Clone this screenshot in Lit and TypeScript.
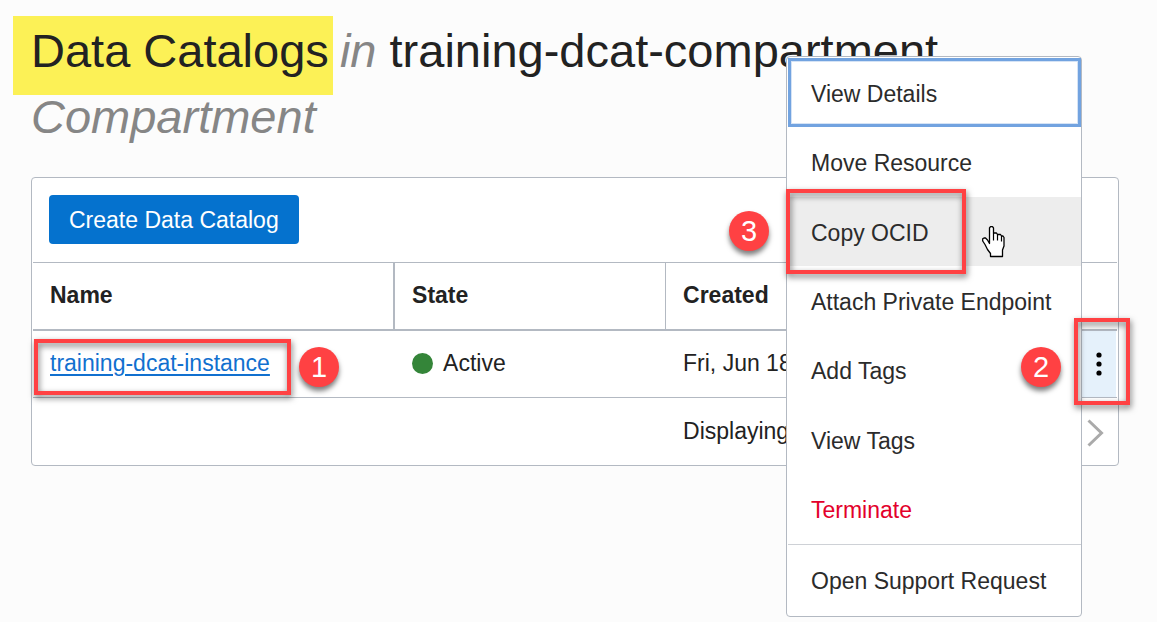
import { LitElement, html, css, svg, nothing } from "lit";
import { customElement, property } from "lit/decorators.js";

@customElement("step-marker")
class StepMarker extends LitElement {
  @property() number = "";

  static styles = css`
    :host {
      display: grid;
      place-items: center;
      width: 40px;
      height: 40px;
      border-radius: 50%;
      background: #ff4143;
      color: #fff;
      font: 400 29px/40px "Liberation Sans", Arial, sans-serif;
      box-shadow: 0 4px 5px rgba(0, 0, 0, 0.5);
    }
  `;

  render() {
    return html`${this.number}`;
  }
}

interface MenuItem {
  label: string;
  tone?: string;
  marked?: boolean;
}

const ITEMS: MenuItem[] = [
  { label: "View Details", tone: "focused" },
  { label: "Move Resource" },
  { label: "Copy OCID", tone: "hovered", marked: true },
  { label: "Attach Private Endpoint" },
  { label: "Add Tags" },
  { label: "View Tags" },
  { label: "Terminate", tone: "danger" },
];

const hand = svg`
  <path d="M7.500 17.500 V2 L8.500 .7 H10.500 L11.500 2 V7 H14.500 L15.500 8.500 H18.500 L19.500 10 H21 L22 11.500 V20 L20.500 24 V30.500 H8.500 V27.500 L5.500 23.500 L3 18.500 L.7 15 V12.800 L2 12 H3.500 L5.500 14 Z"
    fill="#fff" stroke="#000" stroke-width="1.300" stroke-linejoin="round"/>
  <path d="M11.500 7 V14.500 M15.500 8.500 V14.500 M19.500 10 V15.500" fill="none" stroke="#000" stroke-width="1.200"/>`;

@customElement("action-menu")
class ActionMenu extends LitElement {
  static styles = css`
    :host {
      display: block;
      box-sizing: border-box;
      width: 296px;
      border: 1px solid #b3b9c2;
      border-radius: 4px;
      background: #fff;
      padding: 1px 0 1px 1px;
    }
    .group {
      display: flex;
      flex-direction: column;
      min-height: 486px;
    }
    .row {
      position: relative;
      display: flex;
      flex: 1;
    }
    .item {
      flex: 1;
      border: 0;
      background: none;
      padding: 2px 23px 0;
      text-align: left;
      color: #2b2b2b;
      font: 23px/26px "Liberation Sans", Arial, sans-serif;
      white-space: nowrap;
    }
    .focused {
      outline: none;
      box-shadow: inset 0 0 0 3px #72a3e0, inset 0 0 0 4px #d5e3f5;
    }
    .hovered {
      background: #ededed;
    }
    .danger {
      color: #e3002b;
    }
    .support {
      border-top: 1px solid #ced1d6;
      height: 70px;
    }
    .frame {
      position: absolute;
      inset: -8px 115px -8px -2px;
      border: 4px solid #ff4143;
      filter: drop-shadow(1px 3px 3px rgba(0, 0, 0, 0.55));
      pointer-events: none;
    }
    .marker {
      position: absolute;
      right: 100%;
      top: 14px;
      margin-right: 19px;
    }
    .hand {
      position: absolute;
      right: 76px;
      top: 29px;
      width: 23px;
      height: 32px;
    }
  `;

  render() {
    return html`
      <div class="group" role="menu">
        ${ITEMS.map(
          (item) => html`<div class="row">
            <button class="item ${item.tone ?? ""}" role="menuitem">${item.label}</button>
            ${item.marked
              ? html`<span class="frame"></span>
                  <step-marker class="marker" number="3"></step-marker>
                  <svg class="hand" viewBox="0 0 23 32" aria-hidden="true">${hand}</svg>`
              : nothing}
          </div>`
        )}
      </div>
      <div class="row support"><button class="item" role="menuitem">Open Support Request</button></div>
    `;
  }
}

@customElement("app-root")
class AppRoot extends LitElement {
  static styles = css`
    :host {
      display: block;
      position: relative;
      box-sizing: border-box;
      min-height: 100vh;
      padding: 18px 38px 0 31px;
      background: #fcfcfc;
      color: #222;
      font: 23px/26px "Liberation Sans", Arial, sans-serif;
    }
    .title {
      margin: 0 0 27px;
      font-size: 47px;
      line-height: 66px;
      font-weight: 400;
    }
    .highlight {
      background: #fcf156;
      color: inherit;
      padding: 8px 4px 18px 18px;
      margin: 0 -6px 0 -18px;
    }
    .soft {
      color: #868686;
    }
    .card {
      border: 1px solid #b3b9c2;
      border-radius: 4px;
      background: #fff;
      padding: 0 1px;
    }
    .toolbar {
      padding: 17px 16px 18px;
      border-bottom: 1px solid #b3b9c2;
    }
    .create {
      display: block;
      border: 0;
      border-radius: 4px;
      background: #0572ce;
      color: #fff;
      font: inherit;
      height: 49px;
      padding: 0 20px;
    }
    .grid {
      width: 100%;
      table-layout: fixed;
      border-collapse: separate;
      border-spacing: 0;
    }
    .name {
      width: 33.4%;
    }
    .state {
      width: 25%;
    }
    .more {
      width: 36px;
    }
    .grid th,
    .grid td {
      box-sizing: border-box;
      height: 67px;
      padding: 0 17px 2px;
      text-align: left;
      vertical-align: middle;
      white-space: nowrap;
    }
    .grid th {
      height: 68px;
      border-bottom: 2px solid #b3b9c2;
    }
    .grid .strong {
      border-right: 2px solid #b3b9c2;
    }
    .grid .thin {
      border-right: 1px solid #b3b9c2;
    }
    .grid .line {
      position: relative;
      border-bottom: 1px solid #b3b9c2;
    }
    .grid .slim {
      padding: 0;
    }
    .link {
      color: #1170cf;
      text-decoration-thickness: 2px;
      text-underline-offset: 3px;
    }
    .status {
      display: flex;
      align-items: center;
      gap: 10px;
    }
    .dot {
      width: 21px;
      height: 21px;
      border-radius: 50%;
      background: #348539;
    }
    .kebab,
    .next {
      display: grid;
      place-items: center;
      width: 35px;
      height: 66px;
      border: 0;
      padding: 0;
      background: none;
    }
    .kebab {
      background: #e5f1fb;
    }
    .next {
      place-items: center start;
      padding: 2px 0 0 6px;
    }
    .frame {
      position: absolute;
      border: 4px solid #ff4143;
      filter: drop-shadow(1px 3px 3px rgba(0, 0, 0, 0.55));
      pointer-events: none;
      z-index: 3;
    }
    .frame-link {
      inset: 8px auto 2px 1px;
      width: 249px;
    }
    .frame-more {
      inset: -13px -13px -8px -7px;
    }
    .marker {
      position: absolute;
      z-index: 3;
      top: 16px;
    }
    .marker-link {
      left: 266px;
    }
    .marker-more {
      right: 56px;
    }
    .menu {
      position: absolute;
      z-index: 2;
      top: 56px;
      right: 75px;
    }
  `;

  render() {
    return html`
      <h1 class="title">
        <mark class="highlight">Data Catalogs</mark> <em class="soft">in</em> training-dcat-compartment
        <em class="soft">Compartment</em>
      </h1>
      <section class="card">
        <div class="toolbar"><button class="create">Create Data Catalog</button></div>
        <table class="grid">
          <colgroup>
            <col class="name" /><col class="state" /><col /><col class="more" />
          </colgroup>
          <thead>
            <tr>
              <th class="strong" scope="col">Name</th>
              <th class="thin" scope="col">State</th>
              <th scope="col">Created</th>
              <th></th>
            </tr>
          </thead>
          <tbody>
            <tr>
              <td class="line">
                <a class="link" href="#">training-dcat-instance</a>
                <span class="frame frame-link"></span>
                <step-marker class="marker marker-link" number="1"></step-marker>
              </td>
              <td class="line">
                <span class="status"><span class="dot"></span>Active</span>
              </td>
              <td class="line">Fri, Jun 18</td>
              <td class="line slim">
                <button class="kebab" aria-label="Actions">
                  <svg width="6" height="24" viewBox="0 0 6 24" aria-hidden="true">
                    <circle cx="3" cy="3" r="2.6" /><circle cx="3" cy="12" r="2.6" /><circle cx="3" cy="21" r="2.6" />
                  </svg>
                </button>
                <span class="frame frame-more"></span>
                <step-marker class="marker marker-more" number="2"></step-marker>
              </td>
            </tr>
          </tbody>
          <tfoot>
            <tr>
              <td colspan="2"></td>
              <td>Displaying</td>
              <td class="slim">
                <button class="next" aria-label="Next page">
                  <svg width="17" height="28" viewBox="0 0 17 28" aria-hidden="true">
                    <path d="M1.500 1.500 L14.500 14 L1.500 26.500" fill="none" stroke="#aaa" stroke-width="3" />
                  </svg>
                </button>
              </td>
            </tr>
          </tfoot>
        </table>
      </section>
      <action-menu class="menu"></action-menu>
    `;
  }
}
